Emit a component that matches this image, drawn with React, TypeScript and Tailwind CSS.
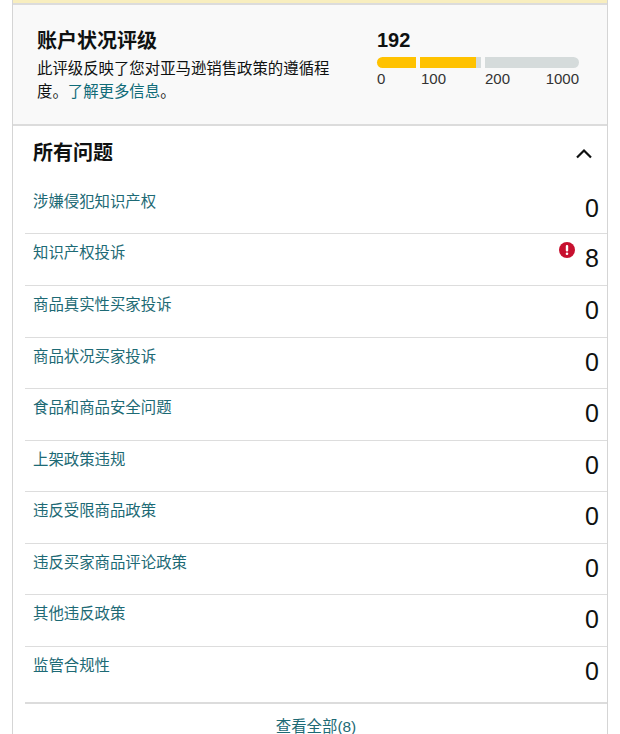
// App.tsx
import React from "react";

const issues = [
  { label: "涉嫌侵犯知识产权", count: 0, h: "h-[51px]" },
  { label: "知识产权投诉", count: 8, alert: true, h: "h-[52px]" },
  { label: "商品真实性买家投诉", count: 0, h: "h-[52px]" },
  { label: "商品状况买家投诉", count: 0, h: "h-[51px]" },
  { label: "食品和商品安全问题", count: 0, h: "h-[52px]" },
  { label: "上架政策违规", count: 0, h: "h-[51px]" },
  { label: "违反受限商品政策", count: 0, h: "h-[52px]" },
  { label: "违反买家商品评论政策", count: 0, h: "h-[51px]" },
  { label: "其他违反政策", count: 0, h: "h-[52px]" },
  { label: "监管合规性", count: 0, h: "h-[55px]" },
];

const font = "font-['Liberation_Sans','Noto_Sans_CJK_SC',sans-serif]";

function AlertIcon() {
  return (
    <svg width="16" height="16" viewBox="0 0 16 16" className="mt-[8px]">
      <circle cx="8" cy="8" r="8" fill="#c7102f" />
      <rect x="6.8" y="3" width="2.4" height="6.6" rx="1.1" fill="#fff" />
      <circle cx="8" cy="11.8" r="1.3" fill="#fff" />
    </svg>
  );
}

export default function App() {
  return (
    <div className={`${font} h-[734px] w-[620px] overflow-hidden bg-white text-[#0f1111]`}>
      <div className="ml-3 flex h-full w-[596px] flex-col border-x border-[#d5d5d5]">
        <div className="h-[3px] shrink-0 bg-[#f8eebf]" />
        <div className="h-[2px] shrink-0 bg-[#dcdcdc]" />

        {/* rating header */}
        <div className="flex h-[119px] shrink-0 bg-[#f9f9f9] pl-6 pt-[21px]">
          <div className="w-[340px]">
            <h2 className="mt-[1px] text-[20px] leading-[28px] font-bold">账户状况评级</h2>
            <p className="mt-[2px] w-[296px] text-[15.4px] leading-[23px]">
              此评级反映了您对亚马逊销售政策的遵循程度。
              <span className="text-[#0f6b78]">了解更多信息</span>。
            </p>
          </div>
          <div className="w-[202px]">
            <div className="text-[20px] leading-[28px] font-bold">192</div>
            <div className="mt-[3px] flex h-[11px] gap-1">
              <div className="w-[39px] rounded-l-full bg-[#ffc200]" />
              <div className="flex w-[61px] bg-[#d5dbdb]">
                <div className="w-[56px] bg-[#ffc200]" />
              </div>
              <div className="flex-1 rounded-r-full bg-[#d5dbdb]" />
            </div>
            <div className="mt-[2px] flex text-[15px] leading-[18px] text-[#333]">
              <span className="w-[44px]">0</span>
              <span className="w-[64px]">100</span>
              <span className="flex-1">200</span>
              <span>1000</span>
            </div>
          </div>
        </div>
        <div className="h-[2px] shrink-0 bg-[#dcdcdc]" />

        {/* all issues */}
        <div className="flex h-[57px] shrink-0 items-start justify-between pl-5 pr-[14px] pt-[13px]">
          <h2 className="text-[20px] leading-[28px] font-bold">所有问题</h2>
          <svg width="18" height="11" viewBox="0 0 18 11" fill="none" className="mt-[9px]">
            <path d="M2 9.5L9 2.5L16 9.5" stroke="#0f1111" strokeWidth="2.2" />
          </svg>
        </div>

        <div className="ml-3 shrink-0">
          {issues.map((it, i) => (
            <div
              key={it.label}
              className={`flex ${it.h} justify-between pl-2 pr-2 ${
                i < issues.length - 1 ? "border-b border-[#dddddd]" : ""
              }`}
            >
              <span className="pt-2 text-[15.4px] leading-[22px] text-[#1d6a75]">{it.label}</span>
              <div className="flex items-start gap-[10px]">
                {it.alert && <AlertIcon />}
                <span className={`${i === 0 ? "pt-[7px]" : "pt-[6px]"} text-[25px] leading-[36px]`}>{it.count}</span>
              </div>
            </div>
          ))}
        </div>

        <div className="ml-3 flex-1 border-t-2 border-[#dcdcdc] pt-3 text-center text-[15.4px] leading-[22px] text-[#1d6a75]">
          查看全部(8)
        </div>
      </div>
    </div>
  );
}
